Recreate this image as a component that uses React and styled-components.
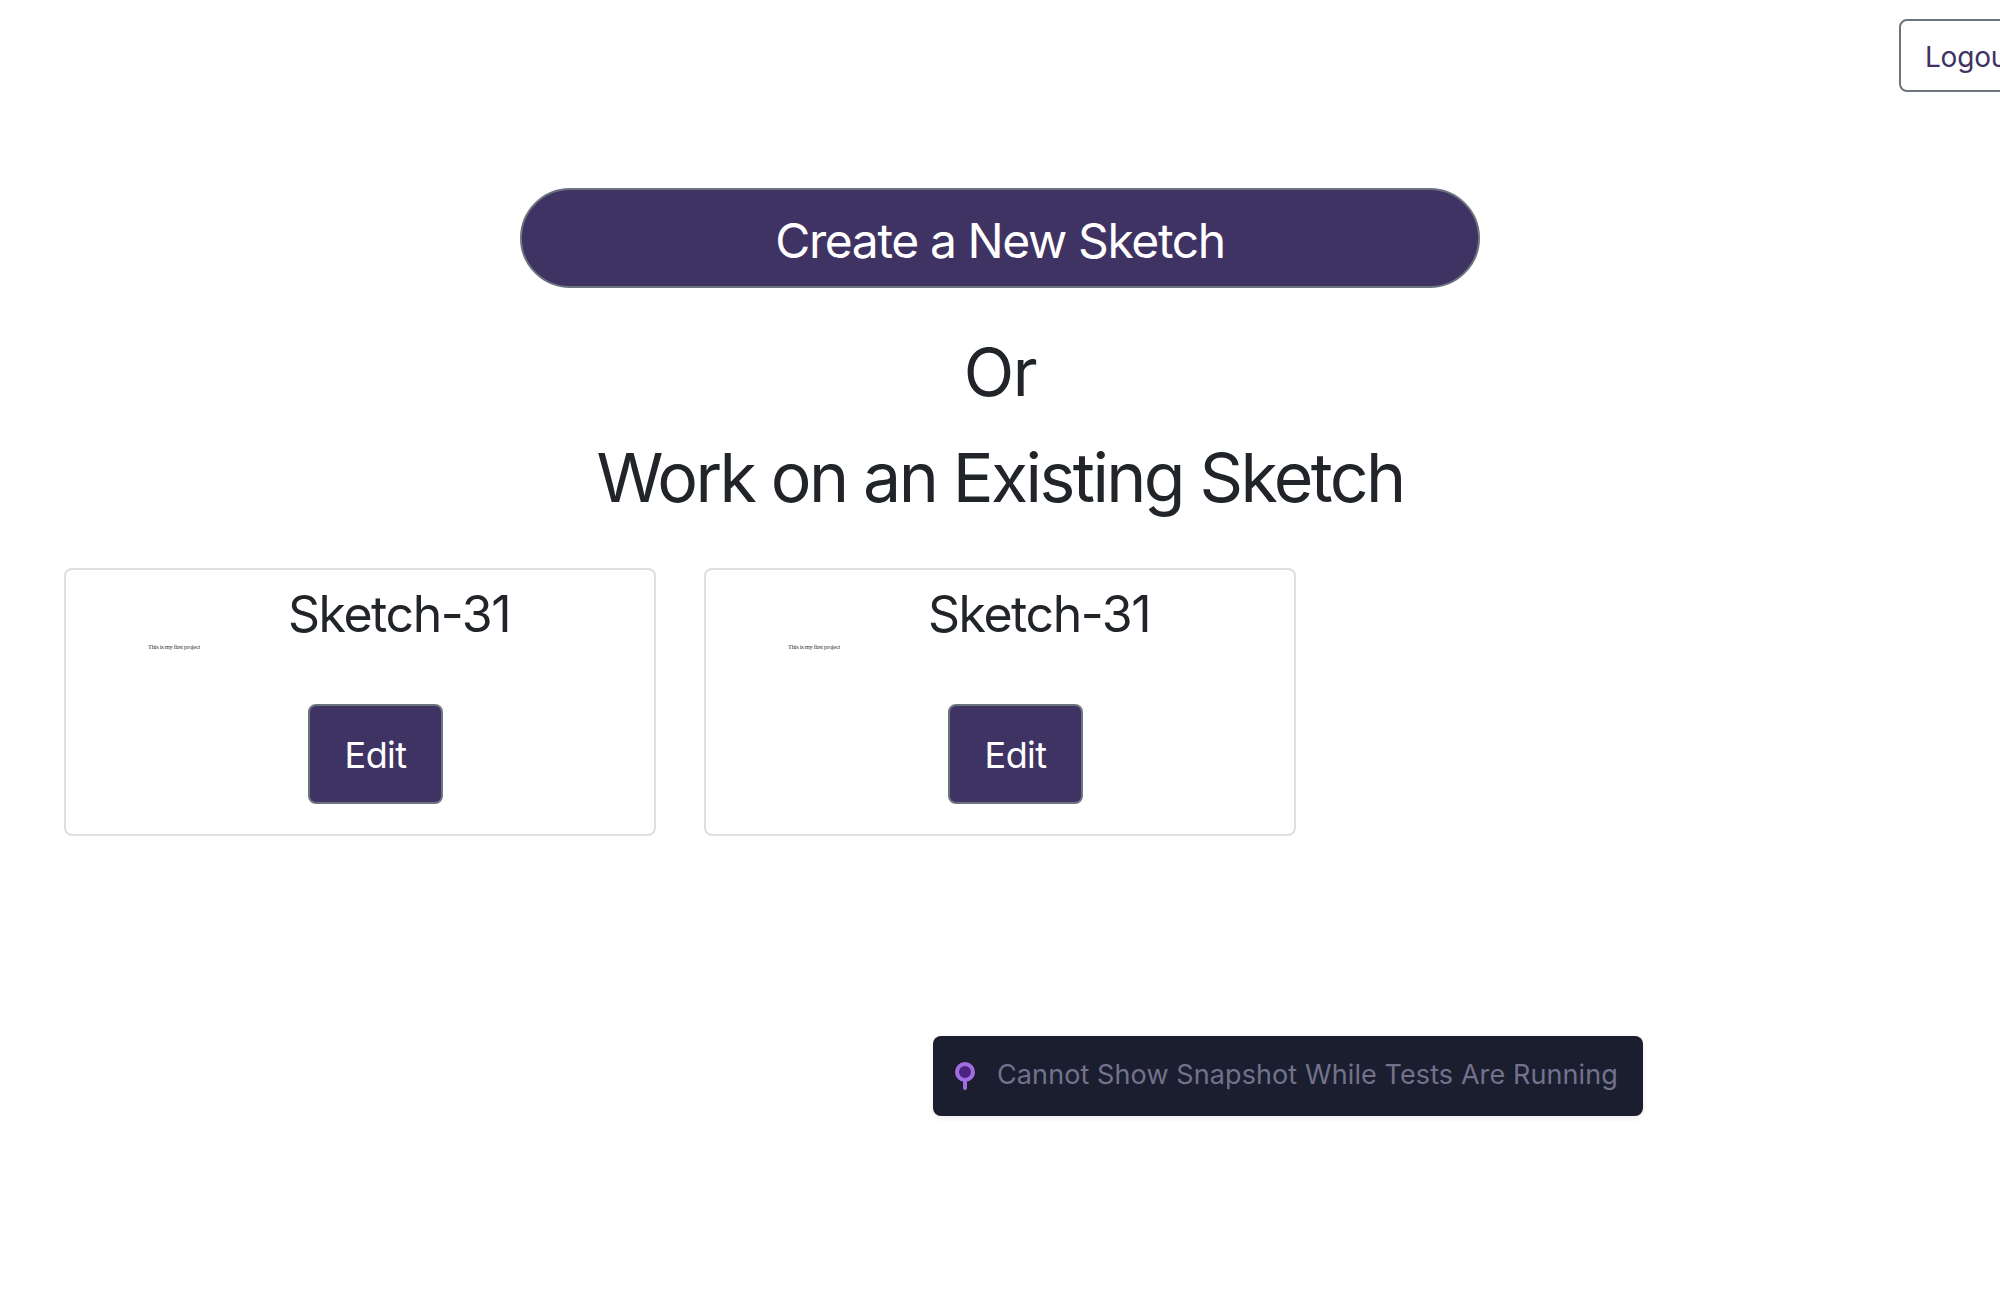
import React from 'react';
import styled, { createGlobalStyle } from 'styled-components';

const sketches = [
  { id: 1, name: 'Sketch-31', note: 'This is my first project' },
  { id: 2, name: 'Sketch-31', note: 'This is my first project' },
];

export default function App() {
  return (
    <Page>
      <GlobalStyle />
      <Header>
        <LogoutButton>Logout</LogoutButton>
      </Header>
      <Main>
        <CreateButton>Create a New Sketch</CreateButton>
        <OrHeading>Or</OrHeading>
        <ExistingHeading>Work on an Existing Sketch</ExistingHeading>
      </Main>
      <CardGrid>
        {sketches.map((sketch) => (
          <Card key={sketch.id}>
            <CardTitle>{sketch.name}</CardTitle>
            <CardNote>{sketch.note}</CardNote>
            <EditButton>Edit</EditButton>
          </Card>
        ))}
      </CardGrid>
      <Toast>
        <svg width="22" height="28" viewBox="0 0 22 28">
          <circle cx="11" cy="10" r="8" fill="#4a2480" stroke="#a06ee0" strokeWidth="4" />
          <line x1="11" y1="19" x2="11" y2="26" stroke="#a06ee0" strokeWidth="4" strokeLinecap="round" />
        </svg>
        <ToastText>Cannot Show Snapshot While Tests Are Running</ToastText>
      </Toast>
    </Page>
  );
}

const GlobalStyle = createGlobalStyle`
  html, body {
    margin: 0;
    padding: 0;
    background: #fff;
    overflow: hidden;
  }

  button {
    font-family: Inter, "Liberation Sans", sans-serif;
    cursor: pointer;
  }
`

const Page = styled.div`
  position: relative;
  width: 2000px;
  height: 1308px;
  overflow: hidden;
  font-family: Inter, "Liberation Sans", sans-serif;
  color: #212529;
`

const Header = styled.header`
  display: flex;
  justify-content: flex-end;
  padding-top: 19px;
  height: 72px;
`

const LogoutButton = styled.button`
  flex-shrink: 0;
  height: 73px;
  width: 143px;
  margin-right: -42px;
  padding: 3px 0 0;
  background: #fff;
  border: 2px solid #6c757d;
  border-radius: 8px;
  color: #3f3364;
  font-size: 28px;
  letter-spacing: -0.2px;
`

const Main = styled.main`
  display: flex;
  flex-direction: column;
  align-items: center;
  padding-top: 97px;
`

const CreateButton = styled.button`
  width: 960px;
  height: 100px;
  padding: 4px 0 0;
  background: #3f3364;
  border: 2px solid #6c757d;
  border-radius: 50px;
  color: #fff;
  font-size: 48px;
  letter-spacing: -1.4px;
`

const OrHeading = styled.h2`
  margin: 46px 0 0;
  font-size: 66px;
  font-weight: 400;
  line-height: 77px;
  letter-spacing: -1.5px;
`

const ExistingHeading = styled.h1`
  margin: 25px 0 0;
  font-size: 68px;
  font-weight: 400;
  line-height: 82px;
  letter-spacing: -2.6px;
`

const CardGrid = styled.section`
  display: flex;
  gap: 48px;
  padding: 50px 0 0 64px;
`

const Card = styled.article`
  box-sizing: border-box;
  width: 592px;
  height: 268px;
  padding: 15px 0 0;
  border: 2px solid #dfdfdf;
  border-radius: 8px;
`

const CardTitle = styled.h3`
  margin: 0;
  padding-left: 78px;
  text-align: center;
  font-size: 50px;
  font-weight: 400;
  line-height: 58px;
  letter-spacing: -1.45px;
`

const CardNote = styled.p`
  margin: 0 0 0 82px;
  height: 61px;
  font-family: "Liberation Serif", serif;
  font-size: 6.5px;
  line-height: 8px;
  letter-spacing: -0.3px;
  color: #333;
`

const EditButton = styled.button`
  display: block;
  width: 135px;
  height: 100px;
  margin-left: 242px;
  padding: 2px 0 0;
  background: #3f3364;
  border: 2px solid #6c757d;
  border-radius: 8px;
  color: #fff;
  font-size: 36px;
  letter-spacing: -0.6px;
`

const Toast = styled.div`
  position: absolute;
  left: 933px;
  top: 1036px;
  box-sizing: border-box;
  width: 710px;
  height: 80px;
  display: flex;
  align-items: center;
  gap: 21px;
  padding-left: 21px;
  background: #1b1e2e;
  border-radius: 8px;
  box-shadow: 0 2px 6px rgba(0, 0, 0, 0.08);
`

const ToastText = styled.span`
  margin-top: -3px;
  font-size: 27px;
  letter-spacing: 0.1px;
  color: #72728c;
  white-space: nowrap;
`
